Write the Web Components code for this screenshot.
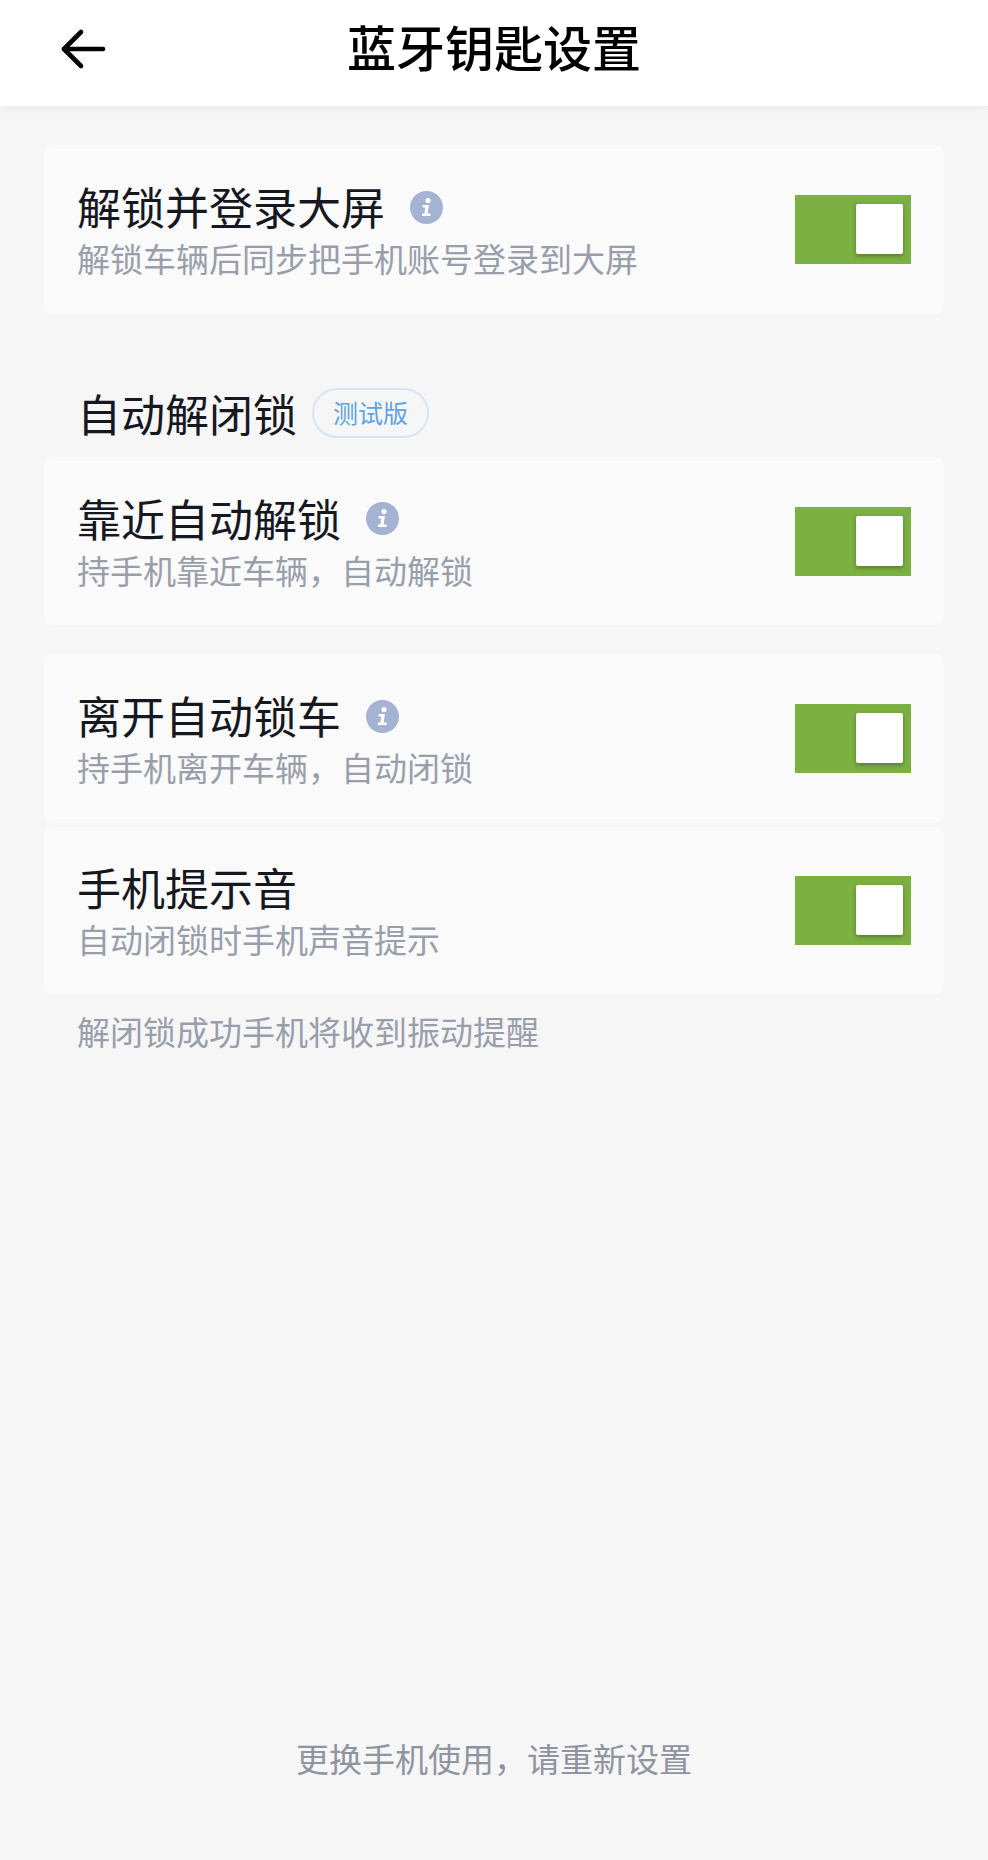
<!DOCTYPE html>
<html lang="zh-CN">
<head>
<meta charset="utf-8">
<title>蓝牙钥匙设置</title>
<style>
html, body { margin: 0; padding: 0; background: #f6f6f7; }
body { font-family: "Noto Sans CJK SC", "Noto Sans", sans-serif; }
</style>
</head>
<body>
<key-settings-page>
    <top-bar>蓝牙钥匙设置</top-bar>

    <setting-card style="--card-h: 169px; margin-top: 39px;" info>
        <span slot="title">解锁并登录大屏</span>
        <span slot="sub">解锁车辆后同步把手机账号登录到大屏</span>
    </setting-card>

    <section-title>自动解闭锁</section-title>

    <setting-card info>
        <span slot="title">靠近自动解锁</span>
        <span slot="sub">持手机靠近车辆，自动解锁</span>
    </setting-card>

    <setting-card style="--card-h: 169px; margin-top: 29px;" info>
        <span slot="title">离开自动锁车</span>
        <span slot="sub">持手机离开车辆，自动闭锁</span>
    </setting-card>

    <setting-card style="--card-h: 167px; margin-top: 4px;">
        <span slot="title">手机提示音</span>
        <span slot="sub">自动闭锁时手机声音提示</span>
    </setting-card>

    <grey-note>解闭锁成功手机将收到振动提醒</grey-note>

    <bottom-link>更换手机使用，请重新设置</bottom-link>
</key-settings-page>

<script>
const barTemplate = document.createElement('template');
barTemplate.innerHTML = `
    <style>
    :host {
        display: flex;
        align-items: center;
        justify-content: center;
        position: relative;
        height: 106px;
        background: #ffffff;
        box-shadow: 0 3px 9px rgba(0, 0, 0, .05);
        color: #000000;
        font-size: 49px;
        font-weight: 500;
    }
    svg {
        position: absolute;
        left: 58px;
        top: 27px;
    }
    .label {
        position: relative;
        top: -8px;
    }
    </style>
    <svg width="50" height="44" viewBox="0 0 50 44" fill="none" stroke="#000" stroke-width="4.6" stroke-linecap="round" stroke-linejoin="round">
        <path d="M45 22H6"/>
        <path d="M23 5L6 22L23 39"/>
    </svg>
    <span class="label"><slot></slot></span>
`;

class TopBar extends HTMLElement {
    constructor() {
        super();
        this.attachShadow({mode: 'open'});
        this.shadowRoot.appendChild(barTemplate.content.cloneNode(true));
    }
}

const toggleTemplate = document.createElement('template');
toggleTemplate.innerHTML = `
    <style>
    :host {
        display: block;
        flex: none;
        width: 116px;
        height: 69px;
        background: #7cb042;
        position: relative;
    }
    .thumb {
        position: absolute;
        left: 61px;
        top: 9px;
        width: 47px;
        height: 50px;
        background: #ffffff;
        border-radius: 2px;
        box-shadow: 0 2px 4px rgba(40, 60, 20, .45);
        filter: blur(.7px);
    }
    </style>
    <div class="thumb"></div>
`;

class ToggleSwitch extends HTMLElement {
    constructor() {
        super();
        this.attachShadow({mode: 'open'});
        this.shadowRoot.appendChild(toggleTemplate.content.cloneNode(true));
    }
}

const cardTemplate = document.createElement('template');
cardTemplate.innerHTML = `
    <style>
    :host {
        display: flex;
        align-items: center;
        justify-content: space-between;
        box-sizing: border-box;
        height: var(--card-h, 168px);
        margin: 0 44px;
        padding: 0 33px;
        background: #fafafb;
        border-radius: 8px;
    }
    .title-row {
        display: flex;
        align-items: center;
        height: 50px;
        font-size: 44px;
        line-height: 50px;
        color: #15181f;
    }
    .sub {
        margin-top: 7px;
        font-size: 33px;
        line-height: 40px;
        color: #999eab;
    }
    svg {
        margin: 2px 0 0 25px;
        display: none;
    }
    :host([info]) svg {
        display: block;
    }
    </style>
    <div>
        <div class="title-row">
            <slot name="title"></slot>
            <svg width="33" height="33" viewBox="0 0 33 33">
                <circle cx="16.5" cy="16.5" r="16.5" fill="#a3b3d1"/>
                <circle cx="18" cy="9.5" r="2.6" fill="#fff"/>
                <path d="M12.5 14H19L17.6 22.6H20.6V25H12V22.6H14.4L15.2 16.4H12.5Z" fill="#fff"/>
            </svg>
        </div>
        <div class="sub"><slot name="sub"></slot></div>
    </div>
    <toggle-switch></toggle-switch>
`;

class SettingCard extends HTMLElement {
    constructor() {
        super();
        this.attachShadow({mode: 'open'});
        this.shadowRoot.appendChild(cardTemplate.content.cloneNode(true));
    }
}

const sectionTemplate = document.createElement('template');
sectionTemplate.innerHTML = `
    <style>
    :host {
        display: flex;
        align-items: center;
        height: 50px;
        margin: 74px 44px 19px;
        padding-left: 33px;
        font-size: 44px;
        color: #15181f;
    }
    .badge {
        box-sizing: border-box;
        width: 117px;
        height: 50px;
        margin-left: 15px;
        border: 2px solid #d6e4f5;
        border-radius: 25px;
        font-size: 25px;
        line-height: 44px;
        text-align: center;
        color: #5ea3e2;
    }
    </style>
    <slot></slot>
    <span class="badge">测试版</span>
`;

class SectionTitle extends HTMLElement {
    constructor() {
        super();
        this.attachShadow({mode: 'open'});
        this.shadowRoot.appendChild(sectionTemplate.content.cloneNode(true));
    }
}

const noteTemplate = document.createElement('template');
noteTemplate.innerHTML = `
    <style>
    :host {
        display: block;
        margin: 16px 0 0 77px;
        font-size: 33px;
        line-height: 42px;
        color: #999eab;
    }
    </style>
    <slot></slot>
`;

class GreyNote extends HTMLElement {
    constructor() {
        super();
        this.attachShadow({mode: 'open'});
        this.shadowRoot.appendChild(noteTemplate.content.cloneNode(true));
    }
}

const linkTemplate = document.createElement('template');
linkTemplate.innerHTML = `
    <style>
    :host {
        display: block;
        margin-top: auto;
        padding-bottom: 81px;
        font-size: 33px;
        line-height: 42px;
        text-align: center;
        color: #8f94a1;
    }
    </style>
    <slot></slot>
`;

class BottomLink extends HTMLElement {
    constructor() {
        super();
        this.attachShadow({mode: 'open'});
        this.shadowRoot.appendChild(linkTemplate.content.cloneNode(true));
    }
}

const pageTemplate = document.createElement('template');
pageTemplate.innerHTML = `
    <style>
    :host {
        display: flex;
        flex-direction: column;
        height: 1860px;
        background: #f6f6f7;
    }
    </style>
    <slot></slot>
`;

class KeySettingsPage extends HTMLElement {
    constructor() {
        super();
        this.attachShadow({mode: 'open'});
        this.shadowRoot.appendChild(pageTemplate.content.cloneNode(true));
    }
}

customElements.define('toggle-switch', ToggleSwitch);
customElements.define('top-bar', TopBar);
customElements.define('setting-card', SettingCard);
customElements.define('section-title', SectionTitle);
customElements.define('grey-note', GreyNote);
customElements.define('bottom-link', BottomLink);
customElements.define('key-settings-page', KeySettingsPage);
</script>
</body>
</html>
